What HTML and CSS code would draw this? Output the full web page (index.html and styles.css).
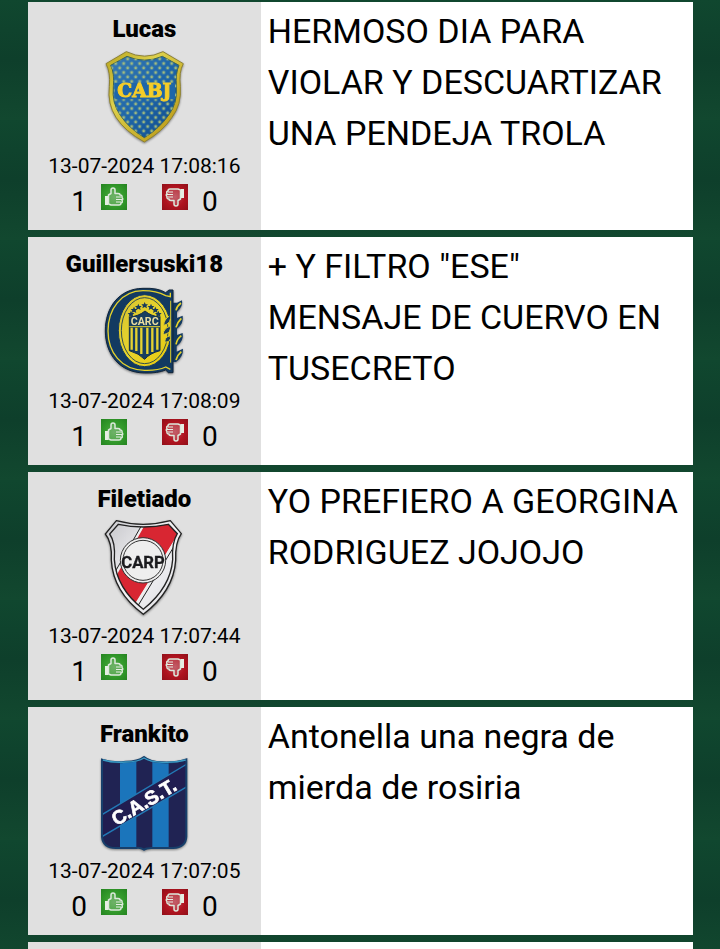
FILE: index.html
```html
<!DOCTYPE html>
<html lang="es">
<head>
<meta charset="utf-8">
<meta name="viewport" content="width=device-width, initial-scale=1">
<title>Mensajes</title>
<link rel="stylesheet" href="styles.css">
</head>
<body>
<svg class="defs" aria-hidden="true">
  <defs>
    <linearGradient id="gold" x1="0" y1="0" x2="1" y2="1"><stop offset="0" stop-color="#b9a51f"/><stop offset=".35" stop-color="#ddd04b"/><stop offset="1" stop-color="#b58f0c"/></linearGradient>
    <linearGradient id="blue" x1="0" y1="0" x2="1" y2="1"><stop offset="0" stop-color="#3679b4"/><stop offset=".5" stop-color="#1e66a9"/><stop offset="1" stop-color="#0d4789"/></linearGradient>
    <linearGradient id="yellow" x1="0" y1="0" x2="1" y2="1"><stop offset="0" stop-color="#d5c231"/><stop offset=".5" stop-color="#e8d42c"/><stop offset="1" stop-color="#e8c90a"/></linearGradient>
    <linearGradient id="silver" x1="0" y1="0" x2="1" y2="1"><stop offset="0" stop-color="#c9c9cd"/><stop offset=".5" stop-color="#f4f4f6"/><stop offset="1" stop-color="#dcdce0"/></linearGradient>
    <radialGradient id="up" cx=".5" cy=".5" r=".75"><stop offset="0" stop-color="#58a550"/><stop offset=".5" stop-color="#339a2b"/><stop offset="1" stop-color="#22801f"/></radialGradient>
    <radialGradient id="down" cx=".5" cy=".5" r=".75"><stop offset="0" stop-color="#b84450"/><stop offset=".5" stop-color="#b01420"/><stop offset="1" stop-color="#8c0f18"/></radialGradient>
    <pattern id="stars" x="0" y="10" width="24" height="27" patternUnits="userSpaceOnUse">
      <g fill="#a9c07c"><path d="M4 0 6 4 10 5 7 8 8 12 4 10 0 12 1 8-2 5 2 4z" transform="translate(2 0)"/><path d="M4 0 6 4 10 5 7 8 8 12 4 10 0 12 1 8-2 5 2 4z" transform="translate(14 13)"/></g>
    </pattern>
    <clipPath id="river"><path d="M86 37Q160 53 236 37L263 65Q246 92 249 143Q243 226 161 292Q80 229 74 143Q78 91 60 66Z"/></clipPath>
    <clipPath id="cast"><path d="M37 35Q68 46 108 41Q145 41 163 27Q181 42 218 43Q260 45 290 34V266Q289 298 250 300H190Q171 299 163 305Q152 298 140 300H78Q40 300 37 267Z"/></clipPath>
    <symbol id="thumb" viewBox="0 0 26 26">
      <path d="M7.500 11 10 9.500V6Q10 4 12 4Q14 4 14 6V9.500H17Q19 9.500 19 11Q21.500 11 21 13.500Q22.500 15 21 16.500Q22 18.500 20 19Q20 21 18 21H10L7.500 20Z" fill="#fff" fill-opacity=".14" stroke="#dce8db" stroke-width="1.500" stroke-linejoin="round"/>
      <path d="M4 12H7V21H4Z" fill="#e6eee3"/><path d="M15 13H20M15 15.500H21M15 18H20" stroke="#e8efe5" stroke-width="1.200"/>
    </symbol>
  </defs>
</svg>
<main class="messages">
  <article class="message">
    <header class="author">
      <h2 class="name">Lucas</h2>
      <svg class="crest" viewBox="16 21 294 294" role="img" aria-label="CABJ">
        <path d="M110 35Q165 62 220 35L281 71Q267 96 272 139Q276 194 247 232Q220 274 164 306Q106 274 79 232Q53 192 59 139Q63 97 49 71Z" fill="url(#gold)" stroke="#8e822f" stroke-width="3"/>
        <path d="M112 49Q165 72 218 49L268 76Q257 99 260 141Q264 189 237 225Q211 264 164 293Q117 264 92 226Q66 189 71 141Q75 100 63 76Z" fill="url(#blue)" stroke="#3c6455" stroke-width="3"/>
        <path d="M112 49Q165 72 218 49L268 76Q257 99 260 141Q264 189 237 225Q211 264 164 293Q117 264 92 226Q66 189 71 141Q75 100 63 76Z" fill="url(#stars)"/>
        <path d="M75 129H256V178H77Z" fill="#1e66a8"/>
        <text class="boca-text" x="164" y="172">CABJ</text>
      </svg>
      <time class="date" datetime="2024-07-13T17:08:16">13-07-2024 17:08:16</time>
      <div class="votes"><span>1</span><button class="vote" aria-label="Me gusta"><svg viewBox="0 0 26 26"><path d="M0 0H26V26H0Z" fill="url(#up)"/><use href="#thumb"/></svg></button><button class="vote vote-down" aria-label="No me gusta"><svg viewBox="0 0 26 26"><path d="M0 0H26V26H0Z" fill="url(#down)"/><use href="#thumb" transform="rotate(180 13 13)"/></svg></button><span>0</span></div>
    </header>
    <p class="text">HERMOSO DIA PARA VIOLAR Y DESCUARTIZAR UNA PENDEJA TROLA</p>
  </article>

  <article class="message">
    <header class="author">
      <h2 class="name">Guillersuski18</h2>
      <svg class="crest" viewBox="16 6 294 294" role="img" aria-label="CARC">
        <path d="M262 68 277 61Q281 80 262 96V114L279 107Q283 130 262 146V165L279 159Q283 183 261 199V215L280 206Q281 231 259 246L250 246V68Z" fill="#123a61"/>
        <path d="M250 30V278H236L228 270Q205 280 165 279C88 278 47 220 47 153C47 82 88 26 160 25Q205 23 228 38L238 30Z" fill="#123a61" stroke="#10243a" stroke-width="3"/>
        <path d="M242 38V50L228 47Q200 32 160 32C94 33 55 88 55 153C55 216 94 270 165 271Q205 272 228 261L242 268" fill="none" stroke="#e5d22c" stroke-width="4"/>
        <ellipse cx="165" cy="152" rx="79" ry="108" fill="url(#yellow)" stroke="#123a61" stroke-width="3"/>
        <ellipse cx="165" cy="152" rx="70" ry="99" fill="none" stroke="#324f4c" stroke-width="3"/>
        <path d="M119 111Q147 109 166 93Q185 109 211 111V212Q180 220 165 238Q148 220 119 212Z" fill="#173e60" stroke="#122c47" stroke-width="3"/>
        <path d="M126 143V209M140 143V213M155 143V222M173 143V222M188 143V216M203 143V209" stroke="#e6d231" stroke-width="7"/>
        <path d="M119 140H211" stroke="#e6d231" stroke-width="3"/>
        <text class="central-text" x="165" y="135">CARC</text>
        <g fill="#16395a"><path id="star" d="M165 66 168 73 175 73 170 78 172 85 165 81 158 85 160 78 155 73 162 73Z"/><use href="#star" x="-19" y="5"/><use href="#star" x="19" y="5"/><use href="#star" x="-32" y="14"/><use href="#star" x="32" y="14"/><use href="#star" x="-41" y="26"/><use href="#star" x="41" y="26"/></g>
        <path d="M239 108Q223 118 222 136Q240 132 242 117M240 139Q222 145 220 164Q242 160 241 148M239 168Q224 172 226 187Q240 187 242 177" fill="#173b5b" stroke="#dccc2e" stroke-width="3"/>
        <path d="M243 62V248" stroke="#dccc2e" stroke-width="3"/>
        <path d="M259 91Q262 78 274 69M259 142Q262 128 275 115M259 193Q262 177 275 167M259 240Q263 225 275 215" fill="none" stroke="#e5d22c" stroke-width="5"/>
      </svg>
      <time class="date" datetime="2024-07-13T17:08:09">13-07-2024 17:08:09</time>
      <div class="votes"><span>1</span><button class="vote" aria-label="Me gusta"><svg viewBox="0 0 26 26"><path d="M0 0H26V26H0Z" fill="url(#up)"/><use href="#thumb"/></svg></button><button class="vote vote-down" aria-label="No me gusta"><svg viewBox="0 0 26 26"><path d="M0 0H26V26H0Z" fill="url(#down)"/><use href="#thumb" transform="rotate(180 13 13)"/></svg></button><span>0</span></div>
    </header>
    <p class="text">+ Y FILTRO "ESE" MENSAJE DE CUERVO EN TUSECRETO</p>
  </article>

  <article class="message">
    <header class="author">
      <h2 class="name">Filetiado</h2>
      <svg class="crest" viewBox="16 15 294 294" role="img" aria-label="CARP">
        <path d="M80 26Q160 48 242 26L275 65Q256 91 258 145Q252 237 161 307Q70 239 65 145Q68 91 47 66Z" fill="url(#silver)" stroke="#222" stroke-width="4"/>
        <path d="M86 37Q160 53 236 37L263 65Q246 92 249 143Q243 226 161 292Q80 229 74 143Q78 91 60 66Z" fill="url(#silver)"/>
        <g clip-path="url(#river)"><path d="M166 32 290 24 122 302 66 208Z" fill="#d82632"/><path d="M162 38 68 205M266 72 133 286" stroke="#eee" stroke-width="7"/><path d="M157 38 63 203M272 72 139 291" stroke="#222" stroke-width="3"/></g>
        <path d="M86 37Q160 53 236 37L263 65Q246 92 249 143Q243 226 161 292Q80 229 74 143Q78 91 60 66Z" fill="none" stroke="#222" stroke-width="4"/>
        <circle cx="160" cy="145" r="68" fill="#eee" stroke="#333" stroke-width="3"/>
        <circle cx="160" cy="145" r="60" fill="none" stroke="#333" stroke-width="3"/>
        <text class="river-text" x="160" y="168">CARP</text>
      </svg>
      <time class="date" datetime="2024-07-13T17:07:44">13-07-2024 17:07:44</time>
      <div class="votes"><span>1</span><button class="vote" aria-label="Me gusta"><svg viewBox="0 0 26 26"><path d="M0 0H26V26H0Z" fill="url(#up)"/><use href="#thumb"/></svg></button><button class="vote vote-down" aria-label="No me gusta"><svg viewBox="0 0 26 26"><path d="M0 0H26V26H0Z" fill="url(#down)"/><use href="#thumb" transform="rotate(180 13 13)"/></svg></button><span>0</span></div>
    </header>
    <p class="text">YO PREFIERO A GEORGINA RODRIGUEZ JOJOJO</p>
  </article>

  <article class="message">
    <header class="author">
      <h2 class="name">Frankito</h2>
      <svg class="crest" viewBox="16 12 294 294" role="img" aria-label="C.A.S.T.">
        <g clip-path="url(#cast)"><path d="M30 20H300V310H30Z" fill="#1b75bb"/><path d="M30 20H91V310H30ZM140 20H188V310H140ZM237 20H300V310H237Z" fill="#202353"/><path d="M35 201 292 48V116L35 267Z" fill="#211d51" stroke="#2279b5" stroke-width="4"/></g>
        <path d="M37 35Q68 46 108 41Q145 41 163 27Q181 42 218 43Q260 45 290 34V266Q289 298 250 300H190Q171 299 163 305Q152 298 140 300H78Q40 300 37 267Z" fill="none" stroke="#173f6b" stroke-width="6"/>
        <path d="M40 36Q70 45 108 42Q145 42 163 30Q181 42 218 43Q258 45 288 36" fill="none" stroke="#3a9ac4" stroke-width="4"/>
        <text class="cast-text" x="163" y="182" transform="rotate(-31 163 163)">C.A.S.T.</text>
      </svg>
      <time class="date" datetime="2024-07-13T17:07:05">13-07-2024 17:07:05</time>
      <div class="votes"><span>0</span><button class="vote" aria-label="Me gusta"><svg viewBox="0 0 26 26"><path d="M0 0H26V26H0Z" fill="url(#up)"/><use href="#thumb"/></svg></button><button class="vote vote-down" aria-label="No me gusta"><svg viewBox="0 0 26 26"><path d="M0 0H26V26H0Z" fill="url(#down)"/><use href="#thumb" transform="rotate(180 13 13)"/></svg></button><span>0</span></div>
    </header>
    <p class="text">Antonella una negra de mierda de rosiria</p>
  </article>

  <article class="message"><header class="author"></header></article>
</main>
</body>
</html>
```
FILE: styles.css
```css
* { box-sizing: border-box; }
body {
  margin: 0;
  height: 100vh;
  overflow: hidden;
  background: repeating-linear-gradient(#10472f 0, #0e3f2b 60px, #12482f 120px);
  color: #000;
  font-family: Roboto, "Liberation Sans", sans-serif;
}
.defs { position: absolute; width: 0; height: 0; }
.messages {
  display: flex;
  flex-direction: column;
  gap: 7px;
  height: 100%;
  overflow: hidden;
  padding: 2px 27px 0 28px;
}
.message {
  display: grid;
  flex: none;
  grid-template-columns: 35% 1fr;
  min-height: 228px;
  background: #fff;
}
.author {
  display: flex;
  flex-direction: column;
  align-items: center;
  padding: 11px 0 8px;
  background: #e0e0e0;
}
.name { margin: 0; font-size: 24px; line-height: 32px; font-weight: 900; }
.crest {
  width: 98px;
  height: 98px;
  margin-top: 2px;
  overflow: visible;
  filter: drop-shadow(0 1px 1px rgba(0, 0, 0, .45));
}
.date { margin-top: 7px; font-size: 21px; line-height: 28px; }
.votes {
  display: flex;
  gap: 14px;
  margin-top: 4px;
  font-size: 28px;
  line-height: 36px;
}
.vote { width: 26px; height: 26px; padding: 0; border: 0; background: none; }
.vote svg { display: block; }
.vote-down { margin-left: 21px; }
.text { margin: 0; padding: 4px 14px 4px 7px; font-size: 34px; line-height: 51px; }
.crest text { text-anchor: middle; font-weight: 700; }
.boca-text { font-family: "DejaVu Serif", serif; font-size: 56px; fill: #f5cd28; stroke: #f5cd28; stroke-width: 3px; }
.central-text { font-size: 32px; fill: #e9dda0; }
.river-text { font-family: "Liberation Sans Narrow", Roboto, sans-serif; font-size: 50px; fill: #1b1b1e; stroke: #1b1b1e; stroke-width: 1px; }
.cast-text { font-family: "Liberation Sans", sans-serif; font-size: 58px; fill: #fff; stroke: #fff; stroke-width: 2px; }
```
